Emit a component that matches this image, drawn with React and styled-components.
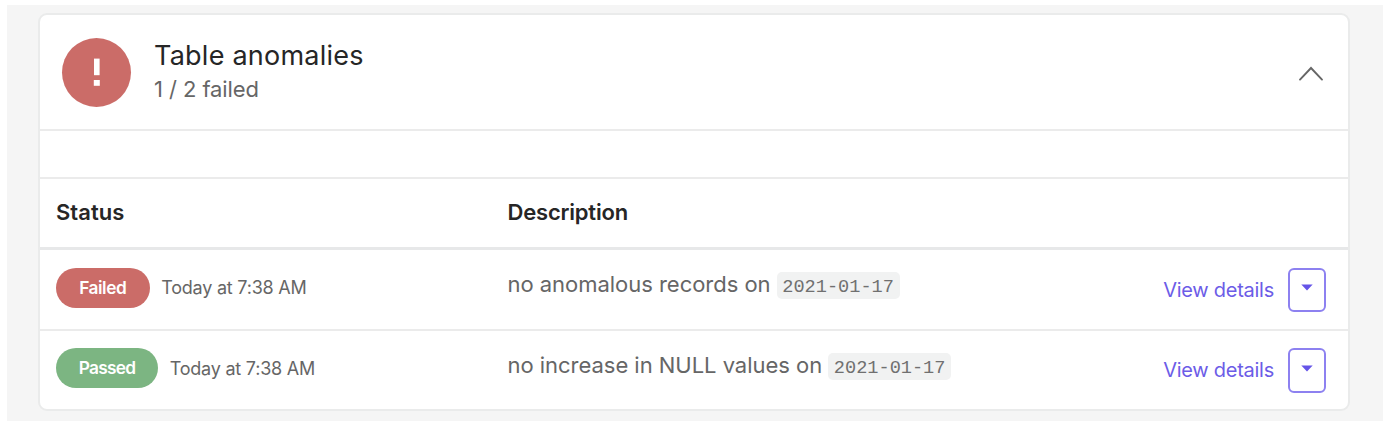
import React from "react";
import styled, { createGlobalStyle } from "styled-components";

const rows = [
  {
    status: "Failed",
    time: "Today at 7:38 AM",
    text: "no anomalous records on",
    date: "2021-01-17",
  },
  {
    status: "Passed",
    time: "Today at 7:38 AM",
    text: "no increase in NULL values on",
    date: "2021-01-17",
  },
];

const App = () => {
  return (
    <Page>
      <GlobalStyle />
      <Panel>
        <Card>
          <CardHeader>
            <AlertCircle>
              <svg width="8" height="30" viewBox="0 0 8 30">
                <rect x="1" y="1.6" width="5.6" height="16.6" fill="#fff" />
                <rect x="0.8" y="23" width="6" height="5.8" fill="#fff" />
              </svg>
            </AlertCircle>
            <TitleContainer>
              <Title>Table anomalies</Title>
              <SubTitle>1 / 2 failed</SubTitle>
            </TitleContainer>
            <Collapse>
              <svg width="26" height="16" viewBox="0 0 26 16">
                <path
                  d="M2 13.6L13 2L24 13.6"
                  fill="none"
                  stroke="#666"
                  strokeWidth="1.9"
                  strokeLinecap="round"
                />
              </svg>
            </Collapse>
          </CardHeader>
          <Spacer />
          <HeadRow>
            <HeadCell spacing="0.05px">Status</HeadCell>
            <HeadCell spacing="-0.2px">Description</HeadCell>
          </HeadRow>
          {rows.map((row) => (
            <Row key={row.status}>
              <StatusCell>
                <Pill status={row.status}>{row.status}</Pill>
                <Time>{row.time}</Time>
              </StatusCell>
              <Description>
                <DescriptionText>{row.text}</DescriptionText>
                <Code>{row.date}</Code>
              </Description>
              <Actions>
                <DetailsLink>View details</DetailsLink>
                <DropdownButton>
                  <svg width="12" height="7" viewBox="0 0 12 7">
                    <path d="M0.3 0.5H11.7L6 6.6Z" fill="#6554e8" />
                  </svg>
                </DropdownButton>
              </Actions>
            </Row>
          ))}
        </Card>
      </Panel>
    </Page>
  );
};

const GlobalStyle = createGlobalStyle`
  body {
    margin: 0;
    background-color: #fff;
    font-family: Inter, "Liberation Sans", sans-serif;
  }
`;

const Page = styled.div`
  padding: 5px 17px 15px 7px;
  width: 1400px;
  height: 436px;
  box-sizing: border-box;
`;
const Panel = styled.div`
  padding: 8px 33px 10px 31px;
  height: 416px;
  box-sizing: border-box;
  background-color: #f5f5f5;
`;
const Card = styled.div`
  height: 398px;
  box-sizing: border-box;
  border: 2px solid #eaebeb;
  border-radius: 9px;
  background-color: #fff;
`;
const CardHeader = styled.div`
  display: flex;
  padding: 23px 24px 0 22px;
  height: 116px;
  box-sizing: border-box;
  border-bottom: 2px solid #ebebeb;
`;
const AlertCircle = styled.div`
  display: flex;
  align-items: center;
  justify-content: center;
  padding-bottom: 1px;
  width: 69px;
  height: 69px;
  box-sizing: border-box;
  border-radius: 50%;
  background-color: #cb6c68;
`;
const TitleContainer = styled.div`
  flex: 1;
  margin-left: 23px;
`;
const Title = styled.div`
  font-size: 27px;
  line-height: 35px;
  letter-spacing: 0.24px;
  color: #262626;
`;
const SubTitle = styled.div`
  font-size: 22px;
  line-height: 32px;
  letter-spacing: -0.08px;
  color: #666;
`;
const Collapse = styled.div`
  padding-top: 28px;
  line-height: 0;
`;
const Spacer = styled.div`
  height: 46px;
  border-bottom: 2px solid #ebebeb;
`;
const HeadRow = styled.div`
  display: grid;
  grid-template-columns: 451.5px 1fr;
  align-items: center;
  padding: 0 0 2px 16px;
  height: 66px;
  border-bottom: 3px solid #e7e8e9;
`;
const HeadCell = styled.div`
  font-size: 22px;
  font-weight: 600;
  letter-spacing: ${(props) => props.spacing};
  color: #262626;
`;
const Row = styled.div`
  display: grid;
  grid-template-columns: 451.5px 1fr auto;
  align-items: start;
  padding: 17.5px 22.5px 0 16px;
  height: 80.5px;
  box-sizing: border-box;
  border-bottom: 2px solid #ebebeb;
  &:last-child {
    border-bottom: none;
  }
`;
const StatusCell = styled.div`
  display: flex;
  align-items: center;
  height: 40px;
`;
const Pill = styled.div`
  margin-right: 12px;
  width: ${(props) => (props.status === "Failed" ? "93.5px" : "102px")};
  height: 40px;
  border-radius: 20px;
  font-size: 17.3px;
  font-weight: 600;
  line-height: 40px;
  letter-spacing: ${(props) =>
    props.status === "Failed" ? "-0.45px" : "-0.7px"};
  text-align: center;
  color: #fff;
  background-color: ${(props) =>
    props.status === "Failed" ? "#cb6c68" : "#7cb582"};
`;
const Time = styled.div`
  margin-left: -0.3px;
  font-size: 18px;
  letter-spacing: -0.22px;
  color: #666;
`;
const Description = styled.div`
  display: flex;
  align-items: center;
  height: 33px;
`;
const DescriptionText = styled.div`
  font-size: 22px;
  letter-spacing: -0.03px;
  color: #666;
`;
const Code = styled.div`
  margin-top: 3px;
  margin-left: 6px;
  width: 123px;
  height: 27px;
  border-radius: 5px;
  font-family: "Liberation Mono", monospace;
  font-size: 18.6px;
  line-height: 31px;
  text-align: center;
  color: #707070;
  background-color: #f1f2f2;
`;
const Actions = styled.div`
  display: flex;
  align-items: center;
`;
const DetailsLink = styled.div`
  margin-right: 14px;
  font-size: 20px;
  letter-spacing: -0.26px;
  color: #6c5ce7;
`;
const DropdownButton = styled.div`
  display: flex;
  align-items: center;
  justify-content: center;
  padding-bottom: 4px;
  width: 37.5px;
  height: 44.5px;
  box-sizing: border-box;
  border: 2px solid #8d81f0;
  border-radius: 6px;
`;

export default App;
